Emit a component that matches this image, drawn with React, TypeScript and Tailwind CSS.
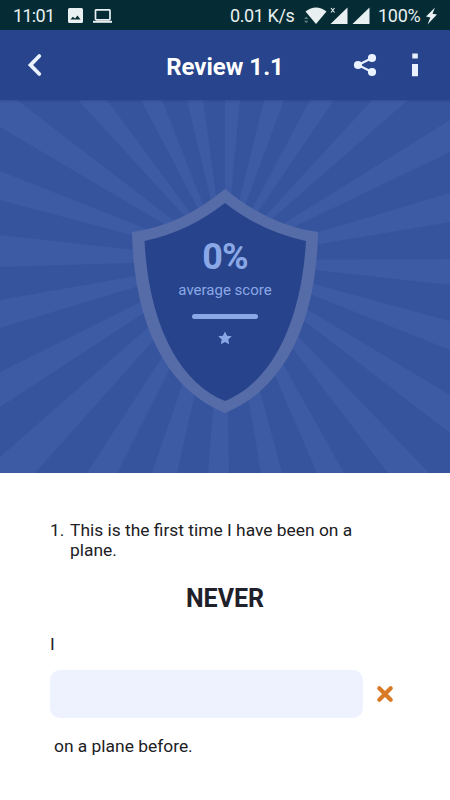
interface Question {
  number: number
  sentence: string
  keyword: string
  before: string
  after: string
}

const question: Question = {
  number: 1,
  sentence: 'This is the first time I have been on a plane.',
  keyword: 'NEVER',
  before: 'I',
  after: 'on a plane before.',
}

// outer ends of each sunburst ray, all of them start at (225, 160)
const rays = [
  '0,27 0,0 17,0', '78,0 107,0', '141,0 162,0', '187,0 203,0',
  '225,0 240,0', '264,0 284,0', '310,0 334,0', '372,0 408,0',
  '450,20 450,52', '450,93 450,122', '450,159 450,185', '450,221 450,250',
  '450,295 450,333', '429,373 388,373', '344,373 317,373', '282,373 261,373',
  '229,373 208,373', '177,373 152,373', '117,373 87,373', '35,373 0,373 0,357',
  '0,307 0,272', '0,228 0,200', '0,167 0,135', '0,100 0,71',
]

const StatusBar = () => (
  <div className="flex h-[30px] items-center justify-between bg-[#052c34] pl-[13px] pr-[13px] pt-px text-[#e9f0f2]">
    <div className="flex items-center">
      <span className="w-[55px] text-[18px] leading-none tracking-[-0.7px]">11:01</span>
      <svg width="15" height="15" viewBox="0 0 15 15" fill="currentColor">
        <path fillRule="evenodd" d="M1.5 0h12A1.5 1.5 0 0 1 15 1.5v12a1.5 1.5 0 0 1-1.5 1.5h-12A1.5 1.5 0 0 1 0 13.5v-12A1.5 1.5 0 0 1 1.5 0ZM2.5 11.5h10l-3-4L7 10.5 4.8 8.7Z" />
      </svg>
      <svg className="ml-[10px]" width="19" height="14" viewBox="0 0 19 14" fill="none" stroke="currentColor">
        <rect x="2.5" y="0.8" width="14.5" height="10" rx="1" strokeWidth="1.7" />
        <path d="M0 12.8h19" strokeWidth="2" />
      </svg>
    </div>
    <div className="flex items-center">
      <span className="w-[74px] whitespace-nowrap text-[18px] leading-none tracking-[-0.4px]">0.01 K/s</span>
      <svg width="66" height="20" viewBox="0 0 66 20" fill="currentColor">
        <path d="M1.5 5.5Q12-2.500 22.5 5.5L12 18Z" />
        <path d="M0 13l2.200-2.500L4.400 13ZM0 14.800l2.200 2.500 2.200-2.500Z" fill="#587b80" />
        <path d="m27 2 3.500 4.500M30.500 2 27 6.500" stroke="currentColor" strokeWidth="1.1" />
        <path d="M43.500 1.500V18H26.500ZM65.500 1.500V18H48.500Z" />
      </svg>
      <span className="ml-2 w-[48px] whitespace-nowrap text-[18px] leading-none tracking-[-0.3px]">100%</span>
      <svg width="11" height="18" viewBox="0 0 11 18" fill="currentColor">
        <path d="M9 .5 0 9.500l4.300 1L1.500 17.500 11 7.500 6.500 6.700Z" />
      </svg>
    </div>
  </div>
)

const Header = () => (
  <header className="relative z-10 flex h-[70px] items-center bg-[#27448c] text-[#eaf1ff] shadow-[0_1px_2px_rgba(30,50,110,0.35)]">
    <button className="w-[100px] pl-[27px]" aria-label="Back">
      <svg width="16" height="24" viewBox="0 0 16 24" fill="none" stroke="currentColor" strokeWidth="3.8" strokeLinecap="round">
        <path d="M12.300 3 3.500 12l8.800 9" />
      </svg>
    </button>
    <h1 className="w-[250px] pt-[3px] text-center text-[24px] font-bold text-white">Review 1.1</h1>
    <div className="flex items-center">
      <button className="ml-[3px]" aria-label="Share">
        <svg width="24" height="24" viewBox="0 0 24 24" fill="currentColor">
          <path d="M19 5 5 12l14 7" fill="none" stroke="currentColor" strokeWidth="2" />
          <circle cx="19" cy="5" r="4.1" />
          <circle cx="5" cy="12" r="4.1" />
          <circle cx="19" cy="19" r="4.1" />
        </svg>
      </button>
      <button className="ml-[34px]" aria-label="Info">
        <svg width="8" height="24" viewBox="0 0 8 24" fill="currentColor">
          <path d="M1.3.6h5.500v5H1.300ZM1 11h6v12.300H1Z" />
        </svg>
      </button>
    </div>
  </header>
)

const ScoreBanner = () => (
  <section className="relative flex h-[373px] flex-col items-center bg-[#36549d] text-[#8ba8e6]">
    <svg className="absolute inset-0" width="450" height="373" viewBox="0 0 450 373">
      <g fill="#3d5ba4">
        {rays.map((points) => (
          <polygon key={points} points={`225,160 ${points}`} />
        ))}
      </g>
      <path fill="#566ca8" d="M225 89Q180 126 132 132C134 230 170 291 225 313C280 291 316 230 318 132Q270 126 225 89Z" />
      <path fill="#26438b" d="M225 103Q188 132 144.500 141C149 226 180 283 225 301C270 283 301 226 306 141Q262 132 225 103Z" />
    </svg>
    <div className="relative flex flex-col items-center pt-[136px]">
      <p className="text-[36px] font-bold leading-[42px] tracking-[-1px]">0%</p>
      <p className="mt-[3px] text-[15px] leading-[18px]">average score</p>
      <div className="mt-[15px] h-[5px] w-[66px] rounded-full bg-[#8ba8e6]" />
      <svg className="mt-[12px]" width="14" height="14" viewBox="0 0 15 14" fill="currentColor">
        <path d="m7.500 0 2.200 4.600 5.100.6-3.800 3.500 1 5-4.500-2.500L3 13.700l1-5L.2 5.200l5.100-.6Z" />
      </svg>
    </div>
  </section>
)

const QuestionBlock = () => (
  <main className="flex flex-1 flex-col bg-white px-[50px] pt-[47px] text-[17.4px] leading-5 text-[#202024]">
    <div className="flex">
      <span className="w-5 shrink-0">{question.number}.</span>
      <p className="w-[290px]">{question.sentence}</p>
    </div>
    <h2 className="mt-6 text-center text-[25px] font-bold leading-[30px] text-[#20202a]">{question.keyword}</h2>
    <p className="mt-5">{question.before}</p>
    <div className="mt-4 flex items-center">
      <input className="h-[48px] w-[313px] rounded-[10px] bg-[#edf2fe] px-3 outline-none" aria-label="Answer" />
      <svg className="ml-[13px] shrink-0" width="18" height="18" viewBox="0 0 18 18" fill="none" stroke="#d97a26" strokeWidth="4.2" strokeLinecap="round">
        <path d="m3.300 3.300 11.400 11.400M14.700 3.300 3.300 14.700" />
      </svg>
    </div>
    <p className="mt-[18px] pl-1">{question.after}</p>
  </main>
)

const App = () => (
  <div className="flex h-[800px] w-[450px] flex-col overflow-hidden bg-white font-['Roboto',sans-serif]">
    <StatusBar />
    <Header />
    <ScoreBanner />
    <QuestionBlock />
  </div>
)

export default App
